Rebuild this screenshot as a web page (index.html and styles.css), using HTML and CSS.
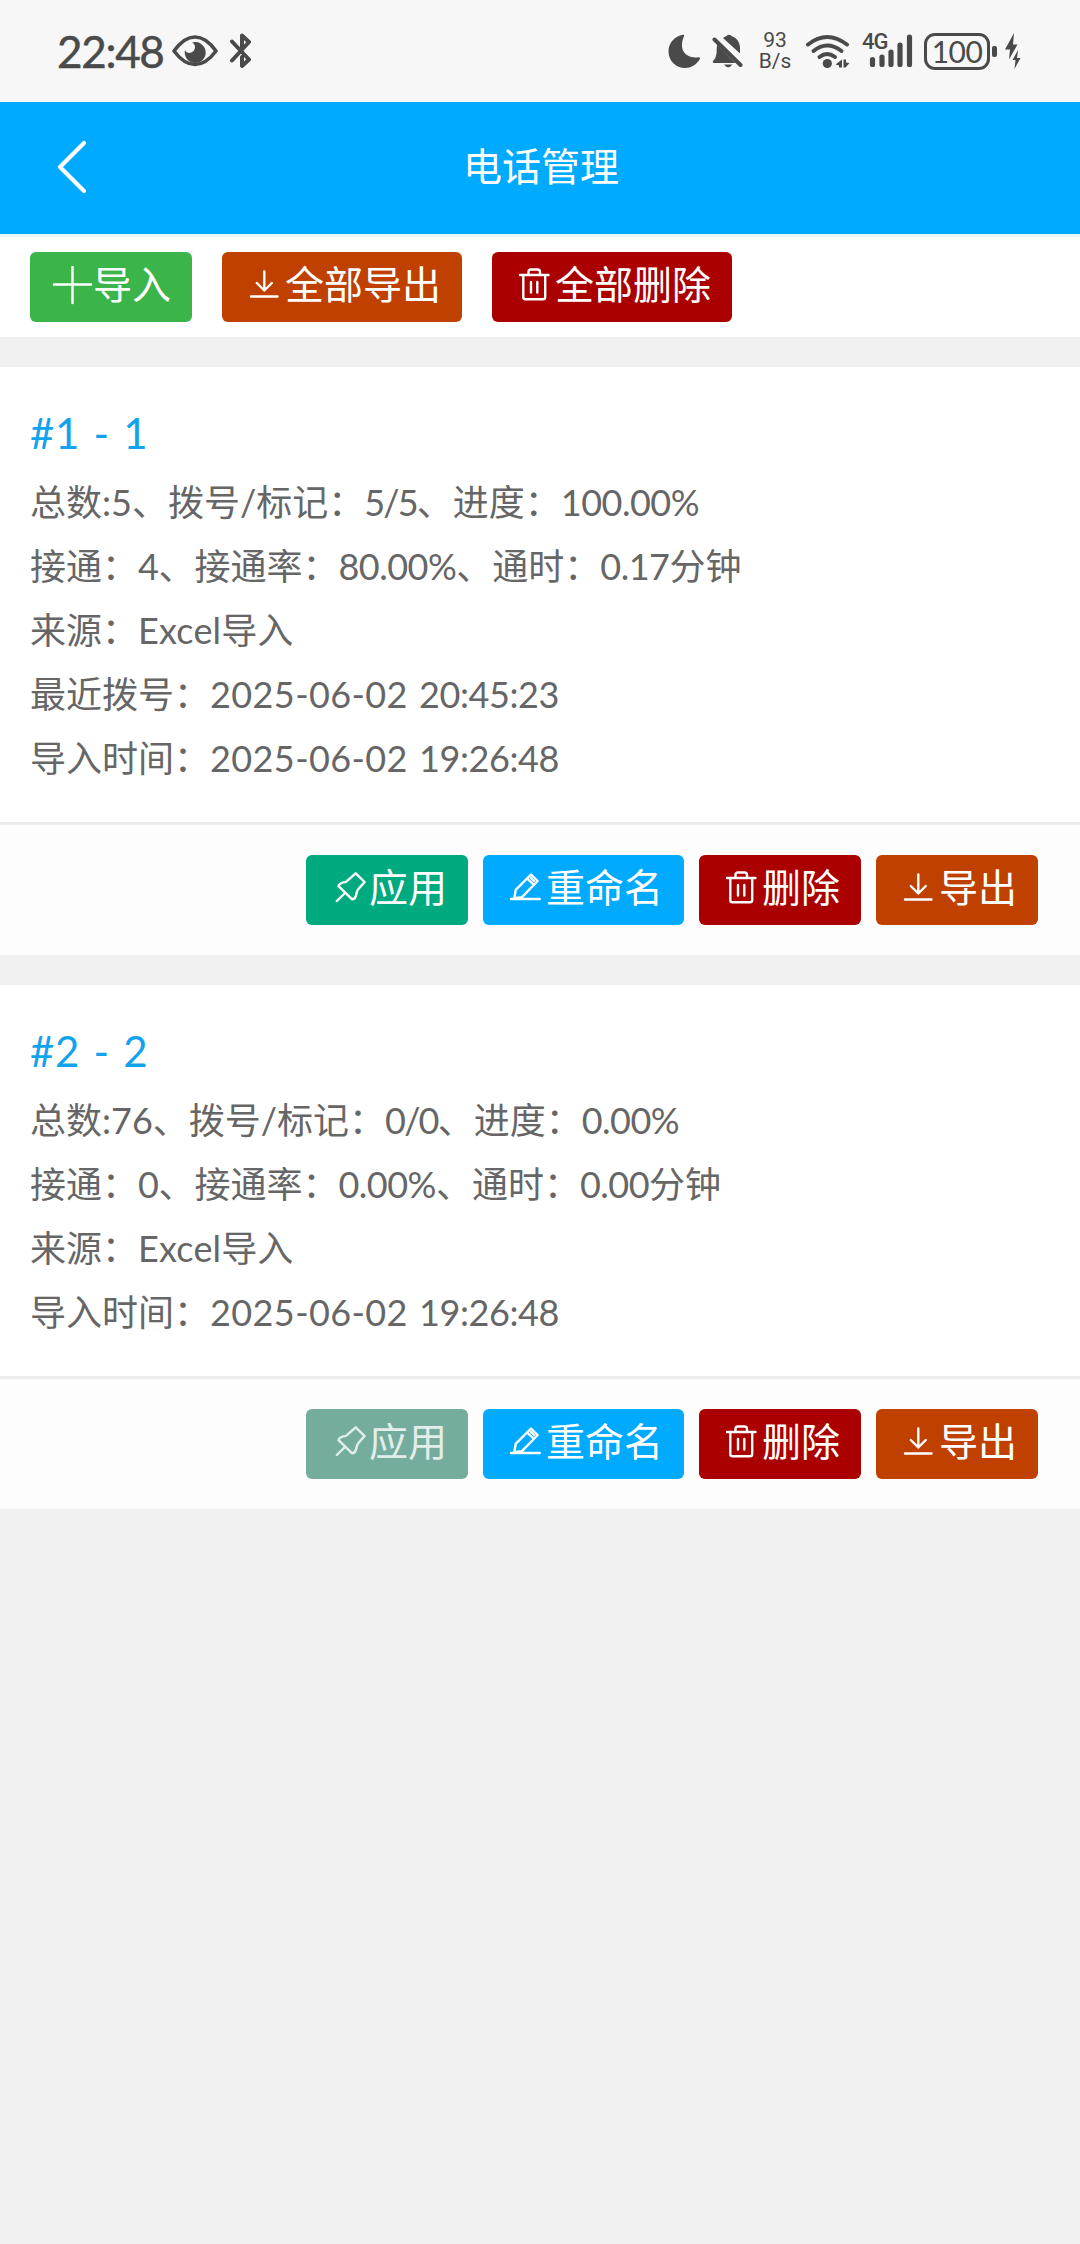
FILE: index.html
```
<!DOCTYPE html>
<html lang="zh-CN">
<head>
    <meta charset="UTF-8">
    <title>电话管理</title>
    <link rel="stylesheet" href="styles.css">
</head>
<body>
    <svg class="sprite">
        <symbol id="icon-plus" viewBox="0 0 42 42"><path d="M3 18.5H40M21.5 0.5V37"/></symbol>
        <symbol id="icon-download" viewBox="0 0 42 42"><path d="M21.3 5.5V24M13.8 17L21.3 24.5L28.8 17M8 30.5H34.5"/></symbol>
        <symbol id="icon-trash" viewBox="0 0 42 42"><path d="M7 9H35.5M15.5 9V6Q15.5 3.5 18 3.5H24.5Q27 3.5 27 6V9M10.3 9V31Q10.3 33.3 12.5 33.3H30Q32.2 33.3 32.2 31V9M18 16V26.5M24.3 16V26.5"/></symbol>
        <symbol id="icon-pin" viewBox="0 0 42 42"><path d="M28.7 4.3L37.6 13L31 20.5Q30.2 22 29.6 24Q28.8 30 25.2 30.3L11.5 17.2Q11.8 14 19 12.9ZM9.8 32L18 24"/></symbol>
        <symbol id="icon-edit" viewBox="0 0 42 42"><path d="M7 30H35.7M10.3 29.3L11.7 20.8L27 5.5L33.7 12L17.7 28.3ZM23 9.3L30 16M27 9L30 12"/></symbol>
    </svg>

    <div class="status-bar">
        <span class="clock">22:48</span>
        <svg class="eye" width="46" height="36" viewBox="0 0 46 36">
            <path d="M2 18Q12 4 23 4Q34 4 44 18Q34 31.500 23 31.500Q12 31.500 2 18Z" fill="none" stroke="#4a4a4a" stroke-width="3.600" stroke-linejoin="round"/>
            <path d="M20 9.500A10.500 10.500 0 1 1 13 17Q14 20 17.500 20Q23 19 23 14Q23 11 20 9.500Z" fill="#4a4a4a"/>
        </svg>
        <svg class="bluetooth" width="24" height="36" viewBox="0 0 24 36">
            <path d="M3 8.500L20 26.500L13 33V24M3 27.500L20 9L13 2.500V15" fill="none" stroke="#4a4a4a" stroke-width="4" stroke-linecap="round" stroke-linejoin="round"/>
        </svg>
        <div class="status-right">
            <svg class="moon" width="34" height="36" viewBox="0 0 34 36">
                <path d="M15 1.800C16 1.500 16.500 2.300 16 3.300C10 17 18 26 30.500 24.200C32 24 32.500 25 31.500 26.800C28 32 23 35 17 35C8 35 0.500 28 0.500 18.500C0.500 10 6.500 3.200 15 1.800Z" fill="#4a4a4a"/>
            </svg>
            <svg class="bell" width="32" height="36" viewBox="0 0 32 36">
                <path d="M11 5Q13 3.500 14.500 3Q17 0.500 19.500 3Q27.500 6 28 14V20.500ZM5 11.500L23.500 30H1.500Q0 29 1.500 27.500Q4 25 4.500 20.500ZM12 31.500H20.500Q16 37 12 31.500Z" fill="#4a4a4a"/>
                <path d="M2.500 6.500L28.500 32" stroke="#4a4a4a" stroke-width="4" stroke-linecap="round"/>
            </svg>
            <div class="speed"><span>93</span><span>B/s</span></div>
            <svg class="wifi" width="46" height="36" viewBox="0 0 46 36">
                <g fill="none" stroke="#4a4a4a" stroke-width="4" stroke-linecap="round">
                    <path d="M3 11.500Q22 -3.500 42 11.500"/>
                    <path d="M8.500 18Q22 7 36.500 18"/>
                    <path d="M14.500 24Q22 18 30 24"/>
                </g>
                <circle cx="22.300" cy="30.500" r="4.600" fill="#4a4a4a"/>
                <path d="M37 26.500V34.500H34V32.500L30.500 31.500ZM38.500 26.500V34.500H40.500L44.500 30L41 29.500V26.500Z" fill="#4a4a4a"/>
            </svg>
            <div class="signal">
                <span class="network">4G</span>
                <svg width="44" height="36" viewBox="0 0 44 36">
                    <path d="M3.500 26.500V31.500M13 24V31.500M22 19V31.500M31 12V31.500M40.500 4V31.500" stroke="#4a4a4a" stroke-width="5.200" stroke-linecap="round"/>
                </svg>
            </div>
            <div class="battery">100</div>
            <div class="battery-tip"></div>
            <svg class="bolt" width="16" height="38" viewBox="0 0 16 38">
                <path d="M9 1L0 17.500H5L4 27.500L12.500 12.500H8ZM13 18L7.500 28H10.500L9.500 37L15.500 26H12Z" fill="#4a4a4a"/>
            </svg>
        </div>
    </div>

    <div class="header">
        <svg class="back" width="32" height="56" viewBox="0 0 32 56">
            <path d="M27 4L3 28L27 52" fill="none" stroke="#fff" stroke-width="4.200" stroke-linecap="round" stroke-linejoin="round"/>
        </svg>
        <h1>电话管理</h1>
    </div>

    <div class="toolbar">
        <button class="btn green"><svg><use href="#icon-plus"/></svg>导入</button>
        <button class="btn orange"><svg><use href="#icon-download"/></svg>全部导出</button>
        <button class="btn red"><svg><use href="#icon-trash"/></svg>全部删除</button>
    </div>

    <div class="card">
        <div class="card-body">
            <h2>#1 - 1</h2>
            <p>总数:5、拨号/标记：<span class="ratio">5/5</span>、进度：<span class="num">100.00%</span></p>
            <p>接通：<span class="num">4</span>、接通率：<span class="num">80.00%</span>、通时：<span class="num">0.17</span>分钟</p>
            <p>来源：<span class="source">Excel</span>导入</p>
            <p>最近拨号：<span class="date">2025-06-02 </span><span class="time">20:45:23</span></p>
            <p>导入时间：<span class="date">2025-06-02 </span><span class="time">19:26:48</span></p>
        </div>
        <div class="card-footer">
            <button class="btn teal"><svg><use href="#icon-pin"/></svg>应用</button>
            <button class="btn blue"><svg><use href="#icon-edit"/></svg>重命名</button>
            <button class="btn red"><svg><use href="#icon-trash"/></svg>删除</button>
            <button class="btn orange"><svg><use href="#icon-download"/></svg>导出</button>
        </div>
    </div>

    <div class="card">
        <div class="card-body">
            <h2>#2 - 2</h2>
            <p>总数:76、拨号/标记：<span class="ratio">0/0</span>、进度：<span class="num">0.00%</span></p>
            <p>接通：<span class="num">0</span>、接通率：<span class="num">0.00%</span>、通时：<span class="num">0.00</span>分钟</p>
            <p>来源：<span class="source">Excel</span>导入</p>
            <p>导入时间：<span class="date">2025-06-02 </span><span class="time">19:26:48</span></p>
        </div>
        <div class="card-footer">
            <button class="btn teal" disabled><svg><use href="#icon-pin"/></svg>应用</button>
            <button class="btn blue"><svg><use href="#icon-edit"/></svg>重命名</button>
            <button class="btn red"><svg><use href="#icon-trash"/></svg>删除</button>
            <button class="btn orange"><svg><use href="#icon-download"/></svg>导出</button>
        </div>
    </div>
</body>
</html>
```
FILE: styles.css
```
* {
    box-sizing: border-box;
}

body, h1, h2, p {
    margin: 0;
    padding: 0;
    font-weight: normal;
}

body {
    background-color: #f0f0f0;
    font-family: Lato, "Noto Sans CJK SC", sans-serif;
    color: #666;
    min-height: 2244px;
}

.sprite {
    display: none;
}

.status-bar {
    display: flex;
    align-items: center;
    height: 102px;
    padding: 0 59px 0 57px;
    background-color: #f7f7f7;
    color: #4a4a4a;
}

.clock {
    width: 115px;
    font-size: 44px;
    line-height: 60px;
    letter-spacing: -1.3px;
    -webkit-text-stroke: 0.5px #4a4a4a;
}

.bluetooth {
    margin-left: 11px;
}

.status-right {
    display: flex;
    align-items: center;
    margin-left: auto;
}

.bell {
    margin-left: 10px;
}

.speed {
    display: flex;
    flex-direction: column;
    align-items: center;
    width: 34px;
    margin-left: 14px;
    font-family: Roboto, sans-serif;
    font-size: 21px;
    line-height: 21px;
}

.wifi {
    margin-left: 13px;
}

.signal {
    position: relative;
    width: 52px;
    height: 36px;
    margin-left: 11px;
}

.signal svg {
    display: block;
    margin-left: 7px;
}

.network {
    position: absolute;
    left: 0;
    top: 0;
    font-family: Roboto, sans-serif;
    font-weight: 500;
    font-size: 22px;
    line-height: 18px;
    letter-spacing: -1px;
}

.battery {
    width: 66px;
    height: 37px;
    margin-left: 10px;
    border: 3px solid #4a4a4a;
    border-radius: 11px;
    font-size: 30px;
    line-height: 30px;
    letter-spacing: -0.6px;
    text-align: center;
}

.battery-tip {
    width: 5px;
    height: 11px;
    margin: 0 8px 0 2px;
    border-radius: 2px;
    background-color: #4a4a4a;
}

.header {
    display: flex;
    align-items: center;
    height: 135px;
    padding: 0 56px 2px 57px;
    background-color: #0af;
    border-bottom: 3px solid #e6f7fb;
    color: #fff;
}

.header h1 {
    flex: 1;
    margin-right: 31px;
    padding-bottom: 3px;
    font-size: 39px;
    line-height: 60px;
    text-align: center;
}

.toolbar {
    display: flex;
    gap: 30px;
    padding: 15px 30px;
    background-color: #fff;
}

.btn {
    display: flex;
    align-items: center;
    height: 70px;
    padding: 0 21px 6px;
    border: none;
    border-radius: 6px;
    color: #fff;
    font-family: inherit;
    font-size: 39px;
    line-height: 60px;
    white-space: nowrap;
}

.btn svg {
    width: 42px;
    height: 42px;
    margin-top: 6px;
    fill: none;
    stroke: currentColor;
    stroke-width: 2.4;
    stroke-linecap: round;
    stroke-linejoin: round;
}

.green {
    background-color: #3bb44a;
}

.orange {
    background-color: #c04000;
}

.red {
    background-color: #a00;
}

.teal {
    background-color: #00aa7f;
}

.blue {
    background-color: #0af;
}

.btn:disabled {
    background-color: #74ad9d;
    color: #e3eeeb;
}

.card {
    margin-top: 30px;
    background-color: #fff;
}

.card-body {
    padding: 29px 30px 32px;
}

.card-body h2 {
    height: 74px;
    font-size: 42px;
    line-height: 74px;
    letter-spacing: 0.7px;
    word-spacing: 2px;
    color: #12a3ec;
}

.card-body p {
    height: 64px;
    font-size: 36px;
    line-height: 64px;
    white-space: nowrap;
}

.num {
    letter-spacing: -0.5px;
}

.ratio {
    letter-spacing: -1.8px;
}

.source {
    letter-spacing: 0.2px;
}

.date {
    letter-spacing: 0.4px;
    word-spacing: 1.5px;
}

.time {
    letter-spacing: -0.4px;
}

.card-footer {
    display: flex;
    justify-content: flex-end;
    gap: 15px;
    padding: 30px 42px;
    border-top: 3px solid #ececec;
    background-color: #fdfdfd;
}
```
